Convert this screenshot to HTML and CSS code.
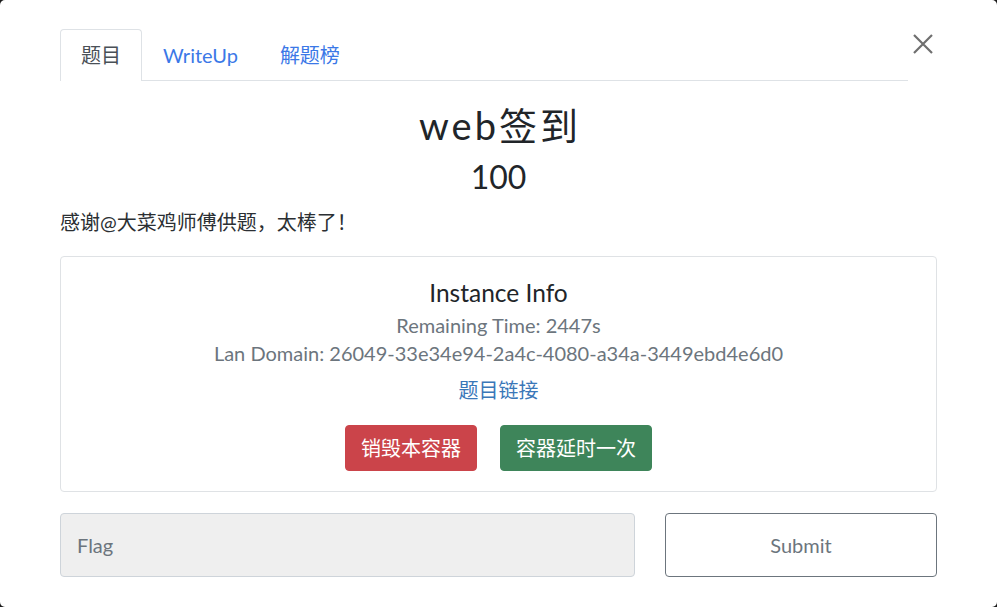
FILE: index.html
```html
<!DOCTYPE html>
<html lang="zh">
<head>
<meta charset="utf-8">
<title>web签到</title>
<link rel="stylesheet" href="styles.css">
</head>
<body>
<div class="modal">
  <div class="header">
    <ul class="tabs">
      <li class="tab active">题目</li>
      <li class="tab">WriteUp</li>
      <li class="tab">解题榜</li>
    </ul>
    <button class="close" aria-label="Close">
      <svg width="20" height="20" viewBox="0 0 20 20"><path d="M1 1 L19 19 M19 1 L1 19" stroke="#6f6f6f" stroke-width="2.2" fill="none"/></svg>
    </button>
  </div>
  <h2 class="title">web签到</h2>
  <h3 class="value">100</h3>
  <p class="desc">感谢@大菜鸡师傅供题，太棒了！</p>
  <div class="card">
    <h4 class="card-title">Instance Info</h4>
    <div class="muted first">Remaining Time: 2447s</div>
    <div class="muted">Lan Domain: 26049-33e34e94-2a4c-4080-a34a-3449ebd4e6d0</div>
    <a class="link" href="#">题目链接</a>
    <div class="actions">
      <button class="btn btn-red">销毁本容器</button>
      <button class="btn btn-green">容器延时一次</button>
    </div>
  </div>
  <div class="submit-row">
    <input class="flag" type="text" placeholder="Flag">
    <button class="submit">Submit</button>
  </div>
</div>
</body>
</html>
```
FILE: styles.css
```css
* { box-sizing: border-box; }
html, body { margin: 0; padding: 0; }
body {
  background: #1b1b1b;
  font-family: Lato, "Noto Sans CJK SC", sans-serif;
  color: #212529;
}
.modal {
  width: 997px;
  height: 607px;
  background: #fff;
  border-radius: 5px;
  padding: 29px 60px 0 60px;
  overflow: hidden;
}
.header {
  display: flex;
  align-items: flex-start;
}
.tabs {
  flex: 1;
  display: flex;
  list-style: none;
  margin: 0;
  padding: 0;
  border-bottom: 1px solid #dee2e6;
}
.tab {
  font-size: 20px;
  line-height: 30px;
  padding: 10px 20px;
  border: 1px solid transparent;
  border-bottom: none;
  border-radius: 4px 4px 0 0;
  color: #3b78e7;
  margin-bottom: -1px;
}
.tab.active {
  color: #495057;
  border-color: #dee2e6;
  background: #fff;
  padding-bottom: 11px;
}
.close {
  width: 29px;
  height: 20px;
  margin-top: 5px;
  padding: 0 0 0 5px;
  border: none;
  background: none;
  display: flex;
}
.title {
  margin: 21px 0 0;
  text-align: center;
  font-size: 38px;
  line-height: 46px;
  font-weight: 400;
  letter-spacing: 3px;
  text-indent: 3px;
}
.value {
  margin: 10px 0 0;
  text-align: center;
  font-size: 32px;
  line-height: 38px;
  font-weight: 400;
}
.desc {
  margin: 11px 0 0;
  font-size: 20px;
  line-height: 30px;
  color: #2b2f33;
}
.card {
  margin-top: 19px;
  border: 1px solid #dfe2e5;
  border-radius: 4px;
  padding: 20px 20px 20px;
  text-align: center;
}
.card-title {
  margin: 0;
  font-size: 24.5px;
  line-height: 32px;
  font-weight: 400;
}
.muted {
  color: #6c757d;
  font-size: 20px;
  line-height: 28px;
}
.muted.first { margin-top: 2px; }
.link {
  display: block;
  margin-top: 8px;
  font-size: 20px;
  line-height: 30px;
  color: #3a77b8;
  text-decoration: none;
}
.actions {
  margin-top: 20px;
  display: flex;
  justify-content: center;
  gap: 23px;
}
.btn {
  font-family: inherit;
  font-size: 20px;
  line-height: 30px;
  padding: 7px 15px;
  border: 1px solid transparent;
  border-radius: 4px;
  color: #fff;
}
.btn-red { background: #cb444a; border-color: #cb444a; }
.btn-green { background: #3e855a; border-color: #3e855a; }
.submit-row {
  margin-top: 21px;
  display: flex;
  gap: 30px;
}
.flag {
  flex: 1;
  height: 64px;
  background: #efefef;
  border: 1px solid #ced4da;
  border-radius: 4px;
  padding: 0 16px;
  font-family: inherit;
  font-size: 20px;
  color: #495057;
}
.flag::placeholder { color: #6c757d; }
.submit {
  width: 272px;
  height: 64px;
  background: #fff;
  border: 1px solid #6c757d;
  border-radius: 4px;
  font-family: inherit;
  font-size: 20px;
  color: #6c757d;
}
```
